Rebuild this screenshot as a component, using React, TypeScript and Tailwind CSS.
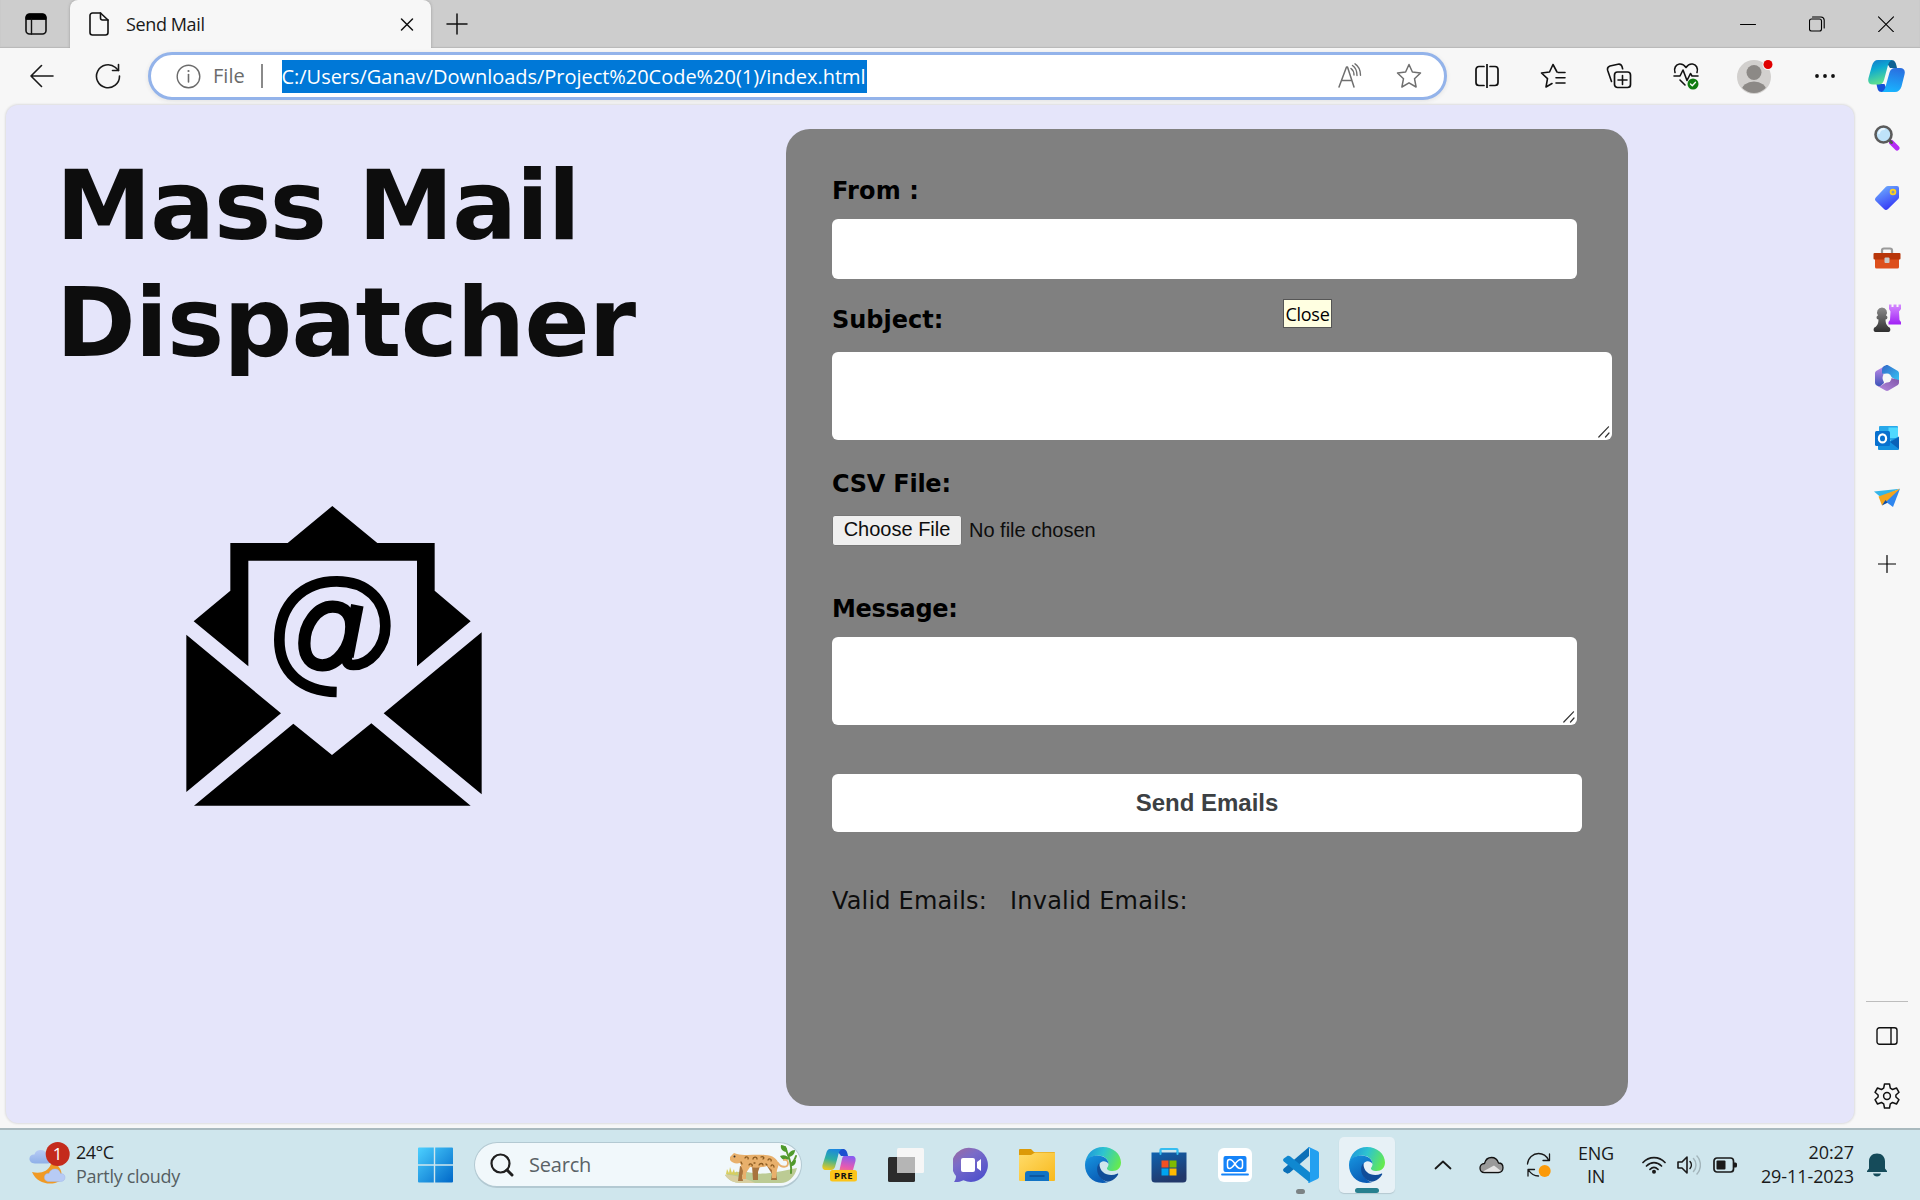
import React from "react";

const UI = "font-['Open_Sans',sans-serif]";
const LABEL = "h-7 leading-7 text-[24px] font-bold text-black whitespace-nowrap";

type SvgProps = { w: number; h: number; children: React.ReactNode; box?: string; className?: string };

function Svg({ w, h, children, box, className }: SvgProps) {
  return (
    <svg
      width={w}
      height={h}
      viewBox={box ?? `0 0 ${w} ${h}`}
      fill="none"
      strokeLinecap="round"
      strokeLinejoin="round"
      className={className ?? "shrink-0"}
    >
      {children}
    </svg>
  );
}

function Cell({ className, children }: { className: string; children: React.ReactNode }) {
  return <div className={`flex shrink-0 items-center justify-center ${className}`}>{children}</div>;
}

function TabStrip() {
  return (
    <div className="flex h-12 bg-[#cdcdcd] shadow-[inset_0_-1px_1px_#b8b8b8]">
      <div className="flex w-[70px] items-center pl-[25px]">
        <Svg w={22} h={22}>
          <rect x="1" y="1" width="20" height="20" rx="3.5" stroke="#111" strokeWidth="1.6" />
          <path d="M1 6V4.500A3.500 3.500 0 0 1 4.500 1h13A3.500 3.500 0 0 1 21 4.500V6z" fill="#000" stroke="#000" />
          <path d="M6.500 6v15" stroke="#111" strokeWidth="1.4" />
        </Svg>
      </div>
      <div className="flex w-[361px] items-center rounded-t-[8px] bg-[#f7f7f7] pl-[19px] shadow-[0_0_3px_#999] [clip-path:inset(0_-4px_0_-4px)]">
        <Svg w={20} h={24}>
          <path d="M3.500 1h8L19 8v12.500a2.500 2.500 0 0 1-2.500 2.500h-13A2.500 2.500 0 0 1 1 20.500v-17A2.500 2.500 0 0 1 3.500 1z" stroke="#111" strokeWidth="1.6" />
          <path d="M11.500 1v5A2 2 0 0 0 13.500 8H19" stroke="#111" strokeWidth="1.6" />
        </Svg>
        <span className="ml-[17px] w-[269px] text-[18px] tracking-[-0.38px] text-[#1a1a1a]">Send Mail</span>
        <Svg w={24} h={24}>
          <path d="M6.500 7l11 11M17.500 7l-11 11" stroke="#111" strokeWidth="1.5" />
        </Svg>
      </div>
      <div className="flex flex-1 items-center pl-[15px]">
        <Svg w={22} h={22}>
          <path d="M11 1v20M1 11h20" stroke="#111" strokeWidth="1.5" />
        </Svg>
      </div>
      <Cell className="w-[70px]">
        <Svg w={16} h={16}>
          <path d="M.5 8.500h15" stroke="#000" strokeWidth="1.100" />
        </Svg>
      </Cell>
      <Cell className="w-[68px]">
        <Svg w={16} h={16}>
          <rect x="0.500" y="3" width="12" height="12" rx="2" stroke="#000" strokeWidth="1.100" />
          <path d="M3.500 1h8.500A3.300 3.300 0 0 1 15.200 4v8" stroke="#000" strokeWidth="1.100" />
        </Svg>
      </Cell>
      <Cell className="w-[69px]">
        <Svg w={16} h={16}>
          <path d="M.5.8l15 15M15.500.8l-15 15" stroke="#000" strokeWidth="1.100" />
        </Svg>
      </Cell>
    </div>
  );
}

function CopilotLogo() {
  return (
    <Svg w={37} h={34}>
      <defs>
        <linearGradient id="cpA" x1="0" y1="0" x2="0.300" y2="1">
          <stop offset="0" stopColor="#1577c9" />
          <stop offset=".4" stopColor="#0ca8d2" />
          <stop offset="1" stopColor="#5fe08e" />
        </linearGradient>
        <linearGradient id="cpB" x1="0.600" y1="0" x2="0.400" y2="1">
          <stop offset="0" stopColor="#2a6fe0" />
          <stop offset="1" stopColor="#18b4ff" />
        </linearGradient>
      </defs>
      <path d="M17 1h6.500c3.500 0 4.500 3 5.500 8h-7z" fill="#0d6193" />
      <path d="M20 33h-6.500C10 33 9.500 30 8.500 25h8z" fill="#1552d8" />
      <path d="M10 1h15c-3.500.5-4.500 3-5.500 7l-3.500 13c-1 3-2.500 4.500-5.500 4.500H5c-4 0-5.500-2.500-4.500-6.500L4 6.500C5 3 7 1 10 1z" fill="url(#cpA)" />
      <path d="M27 33H13c3-.5 4-3 5-7l3.500-12.500c1-3 2.500-4.500 5.500-4.500h5c4 0 5.500 2.500 4.500 6.500L33.500 27.500C32.500 31 30 33 27 33z" fill="url(#cpB)" />
    </Svg>
  );
}

function Toolbar() {
  return (
    <div className="flex h-14 items-center bg-[#f7f7f7]">
      <Cell className="w-[84px]">
        <Svg w={24} h={24}>
          <path d="M23 12H1M11.500 1.500L1 12l10.500 10.500" stroke="#1a1a1a" strokeWidth="1.600" />
        </Svg>
      </Cell>
      <Cell className="w-12">
        <Svg w={26} h={26}>
          <path d="M24.500 13A11.500 11.500 0 1 1 20.500 4.500L23.500 7.500" stroke="#1a1a1a" strokeWidth="1.600" />
          <path d="M23.500 1.500v6h-6" stroke="#1a1a1a" strokeWidth="1.600" />
        </Svg>
      </Cell>
      <div className="ml-4 flex h-12 w-[1299px] items-center rounded-full border-[3px] border-[#93b3ea] bg-white pl-[25px] shadow-[0_1px_4px_#e0e0e0]">
        <Svg w={25} h={25}>
          <circle cx="12.500" cy="12.500" r="11.300" stroke="#6b6b6b" strokeWidth="1.400" />
          <path d="M12.500 10.500v7.500" stroke="#6b6b6b" strokeWidth="1.600" />
          <circle cx="12.500" cy="7" r="1.100" fill="#6b6b6b" />
        </Svg>
        <span className="ml-3 w-12 text-[20px] tracking-[0.050px] text-[#6b6b6b]">File</span>
        <div className="h-6 w-[1.500px] bg-[#8a8a8a]" />
        <span className="ml-[19px] h-[33px] w-[585px] overflow-hidden bg-[#0078d7] text-[20px] leading-[33px] tracking-[-0.03px] whitespace-nowrap text-white">
          C:/Users/Ganav/Downloads/Project%20Code%20(1)/index.html
        </span>
        <div className="flex-1" />
        <Cell className="w-[59px]">
          <Svg w={26} h={26}>
            <path d="M2 24L9.500 4h1L17 24M4.500 17.500h10" stroke="#6f6f6f" strokeWidth="1.500" />
            <path d="M14 5.500c2 1.500 3 3.500 3 6.500M15.500 2.500c3 2 4.500 5.500 4.500 10M18 .800c4 2.500 5.500 6.500 5.500 11.500" stroke="#6f6f6f" strokeWidth="1.400" />
          </Svg>
        </Cell>
        <Cell className="mr-[6px] w-[59px]">
          <Svg w={26} h={26}>
            <path d="M13 1.500l3.400 7.500 8.100 1-6 5.700 1.600 8.300-7.100-4.200L5.900 24l1.600-8.300-6-5.700 8.100-1z" stroke="#6f6f6f" strokeWidth="1.500" />
          </Svg>
        </Cell>
      </div>
      <Cell className="ml-[6px] w-[67px]">
        <Svg w={24} h={24}>
          <path d="M9 2.500H4A3 3 0 0 0 1 5.500v13a3 3 0 0 0 3 3h5M15 2.500h5a3 3 0 0 1 3 3v13a3 3 0 0 1-3 3h-5M12 0v24" stroke="#111" strokeWidth="1.700" />
        </Svg>
      </Cell>
      <Cell className="w-[66px]">
        <Svg w={26} h={26}>
          <path d="M17 9L13 1.500 9.500 9l-8 1 6 5.700L6 24l6-3.500" stroke="#111" strokeWidth="1.600" />
          <path d="M18 9.500h7M16 14.700h9M16 20h9" stroke="#111" strokeWidth="1.600" />
        </Svg>
      </Cell>
      <Cell className="w-[66px]">
        <Svg w={26} h={26}>
          <path d="M5.500 18.500L1.700 7.500C1 5 2 3.700 4 3L12 1.200c2-.4 3.300.3 4 2.300l.6 2.300" stroke="#111" strokeWidth="1.600" />
          <rect x="8.500" y="9" width="16" height="15.500" rx="3" stroke="#111" strokeWidth="1.700" />
          <path d="M16.500 12.500v9M12 17h9" stroke="#111" strokeWidth="1.600" />
        </Svg>
      </Cell>
      <Cell className="w-[67px]">
        <Svg w={26} h={28}>
          <path d="M2 10.500C.5 6 3 2.500 6.500 2c3-.3 5 1.200 6.500 3.500C14.500 3.200 16.500 1.700 19.500 2c3.500.5 6 4 4.500 8.500M7 18l5 5" stroke="#111" strokeWidth="1.600" />
          <path d="M1 14h6l3-6 4 10.500 3.500-7 1.500 2.500h6" stroke="#111" strokeWidth="1.600" />
          <circle cx="20" cy="22" r="5.500" fill="#107c10" />
          <path d="M17.500 22l1.800 1.800 3.200-3.600" stroke="#fff" strokeWidth="1.300" />
        </Svg>
      </Cell>
      <Cell className="w-[72px]">
        <Svg w={38} h={36}>
          <clipPath id="av"><circle cx="18" cy="19" r="16" /></clipPath>
          <circle cx="18" cy="19" r="17" fill="#d2d0ce" />
          <circle cx="18" cy="14.500" r="7.500" fill="#8c8986" />
          <ellipse cx="18" cy="33" rx="12.500" ry="9.500" fill="#8c8986" clipPath="url(#av)" />
          <circle cx="32" cy="6.500" r="5.500" fill="#f7f7f7" />
          <circle cx="32" cy="6.500" r="4.500" fill="#e00000" />
        </Svg>
      </Cell>
      <Cell className="w-[67px]">
        <Svg w={22} h={6}>
          <circle cx="3" cy="3" r="1.900" fill="#111" />
          <circle cx="11" cy="3" r="1.900" fill="#111" />
          <circle cx="19" cy="3" r="1.900" fill="#111" />
        </Svg>
      </Cell>
      <Cell className="w-[57px]">
        <CopilotLogo />
      </Cell>
    </div>
  );
}

function Envelope() {
  return (
    <Svg w={350} h={350} box="0 0 1050 1050" className="mt-[98px] ml-[154px]">
      <g fill="#000">
        <path d="M517 78L652 189H824V332L932 424 771 559V242H265V559L101 424 211 332V189H383z" />
        <path d="M79 464L363 700 79 936zM965 457V943L671 700z" />
        <path d="M102 977L400 731 516 825 634 730 932 977z" />
      </g>
      <g stroke="#000" strokeLinecap="butt">
        <path
          d="M530 636C425 634 358 575 358 480C358 375 428 304 530 304C622 304 676 362 676 438C676 505 626 555 580 555C562 555 558 544 561 524"
          strokeWidth="32"
        />
        <path d="M592 376L562 530" strokeWidth="38" />
        <path d="M574 440C574 402 552 380 518 380C471 380 433 433 433 490C433 532 454 556 487 556C532 556 574 502 574 440z" strokeWidth="37" />
      </g>
    </Svg>
  );
}

function Area({ className }: { className: string }) {
  return (
    <div className={`relative h-[88px] rounded-[6px] bg-white ${className}`}>
      <Svg w={12} h={12} className="absolute right-[2px] bottom-[2px]">
        <path d="M.8 11L10.500.8M7.500 11L11 7" stroke="#333" strokeWidth="1.200" />
      </Svg>
    </div>
  );
}

function MailForm() {
  return (
    <div className="relative mt-[24px] h-[977px] w-[842px] shrink-0 rounded-[24px] bg-[#808080] pt-12 pl-[46px]">
      <div className={`tracking-[0.15px] ${LABEL}`}>From :</div>
      <div className="mt-[14px] h-[60px] w-[745px] rounded-[6px] bg-white" />
      <div className={`mt-[27px] ${LABEL}`}>Subject:</div>
      <Area className="mt-[18px] w-[780px]" />
      <div className={`mt-[30px] tracking-[-0.25px] ${LABEL}`}>CSV File:</div>
      <div className="mt-[17px] flex h-[30px] items-center font-['Liberation_Sans',Arial,sans-serif] text-[20px] text-[#0d0d0d]">
        <div className="h-[31px] w-[130px] rounded-[3px] border border-[#767676] bg-[#efefef] text-center leading-[27px]">Choose File</div>
        <span className="ml-[7px] leading-[30px]">No file chosen</span>
      </div>
      <div className={`mt-[50px] tracking-[-0.3px] ${LABEL}`}>Message:</div>
      <Area className="mt-[14px] w-[745px]" />
      <div className="mt-[49px] h-[58px] w-[750px] rounded-[6px] bg-white text-center font-['Liberation_Sans',Arial,sans-serif] text-[24px] leading-[58px] font-bold text-[#3c4043]">
        Send Emails
      </div>
      <div className="mt-[55px] flex gap-[23px] text-[24px] leading-7 whitespace-nowrap text-[#0d0d0d]">
        <span className="tracking-[0.18px]">Valid Emails:</span>
        <span className="tracking-[0.22px]">Invalid Emails:</span>
      </div>
      <div className={`absolute top-[170px] left-[497px] h-[29px] w-[49px] border border-[#555] bg-[#ffffe1] text-center text-[18px] leading-[28px] tracking-[-0.3px] text-black ${UI}`}>
        Close
      </div>
    </div>
  );
}

function Sidebar() {
  return (
    <div className="mr-[4px] flex w-[58px] shrink-0 flex-col items-center pt-[3px]">
      <Cell className="h-[60px]">
        <Svg w={26} h={26}>
          <path d="M17.500 17.500L23 23" stroke="#b52cf5" strokeWidth="5" />
          <path d="M15.500 15.500l2 2" stroke="#555" strokeWidth="3" />
          <circle cx="9.500" cy="9.500" r="8" fill="#bfe3fa" stroke="#5b5b5b" strokeWidth="2.600" />
          <path d="M5 8a5 5 0 0 1 5-4" stroke="#e8f6ff" strokeWidth="2" />
        </Svg>
      </Cell>
      <Cell className="h-[60px]">
        <Svg w={24} h={24}>
          <defs>
            <linearGradient id="tag" x1="0.200" y1="0" x2="0.700" y2="1">
              <stop offset="0" stopColor="#6fb0ff" />
              <stop offset="1" stopColor="#3131f5" />
            </linearGradient>
          </defs>
          <path d="M13 0h9a2 2 0 0 1 2 2v9c0 1-.3 1.600-1 2.300L13 23c-1.300 1.300-2.700 1.300-4 0L.8 15c-1.200-1.200-1-2.500.2-3.700L10.700 1C11.400.3 12 0 13 0z" fill="url(#tag)" />
          <circle cx="18" cy="6" r="2.400" fill="#8a98a8" stroke="#ffd21f" strokeWidth="1.800" />
        </Svg>
      </Cell>
      <Cell className="h-[60px]">
        <Svg w={28} h={22}>
          <path d="M9 7V3.500A2 2 0 0 1 11 1.500h6A2 2 0 0 1 19 3.500V7" stroke="#9a9a9a" strokeWidth="2.200" />
          <rect x="2" y="8" width="24" height="13.500" rx="1.500" fill="#dd4f1c" />
          <rect x="0.500" y="6" width="27" height="6.500" rx="1" fill="#b8360a" />
          <rect x="11.500" y="10.500" width="5" height="5.500" rx="1" fill="#c9c9c9" />
        </Svg>
      </Cell>
      <Cell className="h-[60px]">
        <Svg w={28} h={28}>
          <defs>
            <linearGradient id="pawn" x1="0" y1="0" x2="0" y2="1">
              <stop offset="0" stopColor="#8a8a8a" />
              <stop offset="1" stopColor="#2f2f2f" />
            </linearGradient>
            <linearGradient id="rook" x1="0" y1="0" x2="0" y2="1">
              <stop offset="0" stopColor="#d58bff" />
              <stop offset="1" stopColor="#a020f5" />
            </linearGradient>
          </defs>
          <path d="M16 .5h2.500V3h2V.5h3V3h2V.5H28V5l-2 2.500.5 8.500 1.500 2v2.500H15.500V18l1.500-2 .5-8.500L16 5z" fill="url(#rook)" />
          <path d="M9 3.500a5 5 0 0 1 4 8c2 .5 2 4-.5 4 0 4 1 5.500 3 7.500 2.500.5 2.500 5 0 5h-13c-2.500 0-2.500-4.500 0-5 2-2 3-3.500 3-7.500-2.500 0-2.500-3.500-.5-4a5 5 0 0 1 4-8z" fill="url(#pawn)" />
        </Svg>
      </Cell>
      <Cell className="h-[60px]">
        <Svg w={24} h={26}>
          <defs>
            <linearGradient id="ma" x1="0" y1="0" x2="0" y2="1">
              <stop offset="0" stopColor="#c48ce8" />
              <stop offset="1" stopColor="#3b53b8" />
            </linearGradient>
            <linearGradient id="mb" x1="0" y1="0" x2="1" y2="1">
              <stop offset="0" stopColor="#3468c8" />
              <stop offset="1" stopColor="#35c5f5" />
            </linearGradient>
            <linearGradient id="mc" x1="0" y1="1" x2="1" y2="0">
              <stop offset="0" stopColor="#b58ae0" />
              <stop offset="1" stopColor="#8055a8" />
            </linearGradient>
          </defs>
          <path d="M9.500 1.200L2 5.500C.7 6.200 0 7.200 0 8.500v9C0 19 .8 20 2 20.700L5 21.500 9 18 8 13z" fill="url(#ma)" />
          <path d="M7 8.500V4.500C7 2.500 8.500 1 10.500.4 11.500 0 12.500 0 13.500.6L22 5.500C23.300 6.200 24 7.200 24 8.500v8L16 12 12 9z" fill="url(#mb)" />
          <path d="M24 15v2.500c0 1.300-.7 2.300-2 3L13.500 25.500c-1 .6-2 .6-3 0L2 20.700c2 .8 4 .3 5.500-1L12 17l4-4z" fill="url(#mc)" />
          <circle cx="12" cy="13" r="4.500" fill="#f7f7f7" />
        </Svg>
      </Cell>
      <Cell className="h-[60px]">
        <Svg w={24} h={24}>
          <rect x="4" y="0" width="19" height="14" rx="1" fill="#28a8ea" />
          <path d="M13.500 1.500H23V12h-9.500z" fill="#50d9ff" />
          <path d="M3 12l11 3 10-4.500V23a1 1 0 0 1-1 1H4a1 1 0 0 1-1-1z" fill="#1490df" />
          <path d="M24 11v12l-9-7z" fill="#0a62b8" />
          <rect x="0" y="5" width="15" height="15" rx="1.500" fill="#0871cf" />
          <ellipse cx="7.500" cy="12.400" rx="3.600" ry="4" stroke="#fff" strokeWidth="2.200" />
        </Svg>
      </Cell>
      <Cell className="h-[60px]">
        <Svg w={26} h={20}>
          <path d="M0 3.500L26 .8 6.500 9z" fill="#35b5e8" />
          <path d="M26 .8L19 19 9.500 12z" fill="#2f86ee" />
          <path d="M26 .8L4.500 8.500 8 17.500z" fill="#f5a51c" />
          <path d="M8 17.500L11.500 12l2 2.800z" fill="#0d4ea8" />
        </Svg>
      </Cell>
      <Cell className="h-[71px]">
        <Svg w={18} h={18}>
          <path d="M9 .5v17M.5 9h17" stroke="#000" strokeWidth="1.200" />
        </Svg>
      </Cell>
      <div className="flex-1" />
      <div className="h-px w-[42px] bg-[#bdbdbd]" />
      <Cell className="h-[67px]">
        <Svg w={22} h={18}>
          <rect x="1" y="0.800" width="20" height="16.400" rx="2.500" stroke="#111" strokeWidth="1.400" />
          <path d="M15 1v16" stroke="#111" strokeWidth="1.400" />
        </Svg>
      </Cell>
      <Cell className="mb-[6px] h-[53px]">
        <Svg w={26} h={26}>
          <path
            d="M10.500 1h5l.8 4.200 2.200 1.300L22.500 5 25 9.300 21.900 12v2L25 16.700 22.500 21l-4-1.500-2.200 1.300-.8 4.200h-5l-.8-4.200-2.200-1.300-4 1.500L1 16.700 4.100 14v-2L1 9.300 3.500 5l4 1.500 2.200-1.300z"
            stroke="#111"
            strokeWidth="1.500"
          />
          <circle cx="13" cy="13" r="3.400" stroke="#111" strokeWidth="1.500" />
        </Svg>
      </Cell>
    </div>
  );
}

function EdgeLogo() {
  return (
    <Svg w={36} h={36}>
      <defs>
        <linearGradient id="eTop" x1="0" y1="0.300" x2="1" y2="0.600">
          <stop offset="0" stopColor="#1e95dc" />
          <stop offset=".45" stopColor="#2ec4cf" />
          <stop offset="1" stopColor="#66eb4e" />
        </linearGradient>
        <linearGradient id="eMid" x1="0" y1="0" x2="0.500" y2="1">
          <stop offset="0" stopColor="#1795e0" />
          <stop offset="1" stopColor="#0a5cb5" />
        </linearGradient>
      </defs>
      <path d="M0 17C1 7 8 0 18 0c10 0 18 7 18 15.500 0 5-3.500 8.500-8.500 8.500-4 0-6-1.500-5.500-3 1-1.500 1.500-2.500 1.500-4C23.500 12 19 8.500 13 8.500 6 8.500 1.500 12.500 0 17z" fill="url(#eTop)" />
      <path d="M0 18C0 12 5.500 8.500 12 8.500c7 0 11.500 4 11.500 8.500-2-3.500-8-4-9.500 1-2 7 1 15 9 17.300C9 38.500 0 29 0 18z" fill="url(#eMid)" />
      <path d="M14.500 16C10 20 12 30 19 33.500c2 1.200 4 1.500 6 .8 3.500-1.300 6-3.500 8-6.600.5-.9 0-1.400-1-.9C25 30 14 27 14.500 16z" fill="#104d99" />
    </Svg>
  );
}

function Leopard() {
  return (
    <Svg w={76} h={42}>
      <path d="M0 31c8-4 18-4 28-2s26-1 44-5c-2 9-9 15-16 15H16C9 39 3 36 0 31z" fill="#bccb94" />
      <path d="M0 31c6-1 20 3 30 8H16C9 39 3 36 0 31z" fill="#d8cfa0" />
      <path d="M1 30l1-5 2 4 1-6 2 6 2-4 1 5 2-3 1 4z" fill="#d9cf5e" />
      <path d="M66 29c1-9-2-15-6-26M66 20c3-2 4-5 5-8" stroke="#5c9a32" strokeWidth="2" />
      <path d="M56 1c5 0 7 4 6 7-4 0-7-3-6-7zM70 6c0 4-3 7-7 7 0-4 3-7 7-7zM55 12c4-2 8 0 9 3-4 2-7 1-9-3zM71 16c0 4-2 6-5 6 0-3 2-6 5-6z" fill="#4f9a2c" />
      <path d="M15 22l7 2-1 5-4 2 1 6h-5zM27 22h8l-2 6v8h-5zM42 22l10-3-1 8 1 9h-6l1-6z" fill="#a8743e" />
      <path d="M5 13l4-4 3 1c8 2 20 0 28 1 8 0 12 4 14 9l-2 6-1 8h-4l0-8-5-4c-6 2-12 2-17 1l-4 6v6h-4l1-8-3-8c-4 1-8 0-10-3z" fill="#e8b06c" />
      <path d="M53 19c3 5 10 5 10 0 0-2-2-4-4-3" stroke="#e8b06c" strokeWidth="1.800" />
      <g stroke="#8a5a20" strokeWidth="1.300">
        <path d="M20 14c1-2 4-1 3 1M28 15c0-2 4-3 4 0M36 13c2-1 4 1 2 2M24 21c1-2 4-1 3 1M34 21c1-2 4-2 4 0M43 16c1-2 4-1 3 1M46 22c1-2 3-1 3 1M16 18l1 2M29 19h1M41 20l1 1" />
      </g>
      <circle cx="9.500" cy="12.500" r="1" fill="#333" />
    </Svg>
  );
}

function Taskbar() {
  return (
    <div className={`flex h-[72px] items-center border-t-2 border-[#a9b9be] bg-[#cfe6ed] text-[#1a1a1a] ${UI}`}>
      <div className="ml-[29px] flex w-[388px] items-center">
        <Svg w={41} h={43} className="mb-1 shrink-0">
          <defs>
            <linearGradient id="cl" x1="0" y1="0" x2="0" y2="1">
              <stop offset="0" stopColor="#b7cbf5" />
              <stop offset="1" stopColor="#8fb0e8" />
            </linearGradient>
          </defs>
          <path d="M27 22c6 5 7 11 4 17C22 44 8 42 3 30c8 2 16 0 19-8z" fill="#f09a25" />
          <path d="M6 21.500c-4 0-6-3-5.500-5.500S3 12 5.500 12.500C6.500 9 9 8 12 8s5.500 2 6 5c3 0 5 2 5 4.500s-2 4-4 4z" fill="url(#cl)" />
          <path d="M20 39.500c-3.500 0-5-2.500-4.500-5s2.500-3.500 4.500-3c1-3 3-4.500 6-4.500s5 2 5.500 4.500c3 0 4.500 1.500 4.500 4s-2 4-4 4z" fill="#b7cbf5" stroke="#a0b8ea" strokeWidth="0.500" />
          <circle cx="28.700" cy="12" r="12" fill="#c42b1c" />
          <text x="28.500" y="18" textAnchor="middle" fill="#fff" fontSize="17" fontFamily="Open Sans">1</text>
        </Svg>
        <div className="mb-[3px] ml-[6px] text-[18px] leading-6">
          <div className="tracking-[-0.5px]">24°C</div>
          <div className="tracking-[-0.3px] text-[#555e62]">Partly cloudy</div>
        </div>
      </div>
      <Svg w={36} h={36}>
        <defs>
          <linearGradient id="win" x1="0" y1="0" x2="1" y2="1">
            <stop offset="0" stopColor="#4cd0ff" />
            <stop offset="1" stopColor="#0068c8" />
          </linearGradient>
        </defs>
        <path d="M2 .500h14.800v16.800H1V1.500A1 1 0 0 1 2 .500zM18.200.500H35a1 1 0 0 1 1 1v15.800H18.200zM1 18.700h15.800v16.800H2a1 1 0 0 1-1-1zM18.200 18.700H36v15.800a1 1 0 0 1-1 1H18.200z" fill="url(#win)" />
      </Svg>
      <div className="ml-[21px] flex h-[46px] w-[328px] items-center overflow-hidden rounded-full border border-b-2 border-[#b3c9d2] bg-[#f1f8fb] pl-[15px]">
        <Svg w={24} h={24}>
          <circle cx="10.500" cy="10.500" r="9" stroke="#1f1f1f" strokeWidth="2.200" />
          <path d="M17 17l5 5" stroke="#1f1f1f" strokeWidth="3" />
        </Svg>
        <span className="ml-[15px] w-[196px] text-[20px] tracking-[-0.200px] text-[#5a6266]">Search</span>
        <Leopard />
      </div>
      <Cell className="ml-[5px] w-[66px]">
        <Svg w={36} h={34}>
          <defs>
            <linearGradient id="pa" x1="0.600" y1="0" x2="0.400" y2="1">
              <stop offset="0" stopColor="#1a86e0" />
              <stop offset=".5" stopColor="#2fb0a0" />
              <stop offset="1" stopColor="#e8c820" />
            </linearGradient>
            <linearGradient id="pb" x1="0.500" y1="0" x2="0.300" y2="1">
              <stop offset="0" stopColor="#8a5cf0" />
              <stop offset=".6" stopColor="#e85ab0" />
              <stop offset="1" stopColor="#f58a60" />
            </linearGradient>
          </defs>
          <path d="M14 1h7c3 0 4 2 5 7h-7z" fill="#1c4fd0" />
          <path d="M8 1h13c-3 0-4 3-5 7l-3 11c-.8 2-2 3-4 3H4c-3 0-4-2-3.500-5L4 6C4.800 2.500 6 1 8 1z" fill="url(#pa)" />
          <path d="M22 8h8c3 0 4 2 3.500 5L31 22c-1 3-2 4-4 4H14c2 0 3-2 3.500-4L20 11c.5-2 1-3 2-3z" fill="url(#pb)" />
          <rect x="8" y="22" width="27" height="11.500" rx="2.500" fill="#fcc419" />
          <text x="21.500" y="31.300" textAnchor="middle" fill="#111" fontSize="9.500" fontWeight="bold" fontFamily="Open Sans" letterSpacing="0.500">PRE</text>
        </Svg>
      </Cell>
      <Cell className="w-[65px]">
        <Svg w={36} h={36}>
          <rect x="0" y="10" width="27" height="25" rx="1.500" fill="#2c2c2c" />
          <rect x="9" y="1" width="27" height="25" rx="1.500" fill="#f6f6f6" />
          <rect x="9" y="10" width="18" height="16" fill="#b5b5b5" />
        </Svg>
      </Cell>
      <Cell className="w-[66px]">
        <Svg w={36} h={36}>
          <defs>
            <linearGradient id="chat" x1="0" y1="0" x2="0.700" y2="1">
              <stop offset="0" stopColor="#a06a9c" />
              <stop offset=".4" stopColor="#7a6cc8" />
              <stop offset="1" stopColor="#4f50cc" />
            </linearGradient>
          </defs>
          <path d="M18 1a17 17 0 1 1-7.500 32.300C7 35 4 35.300 1 35c1.500-2 2-4 2-6A17 17 0 0 1 18 1z" fill="url(#chat)" />
          <rect x="8" y="11" width="14" height="14" rx="2" fill="#fff" />
          <path d="M24 15l4-3v12l-4-3z" fill="#fff" />
        </Svg>
      </Cell>
      <Cell className="w-[66px]">
        <Svg w={36} h={34}>
          <defs>
            <linearGradient id="fold" x1="0" y1="0" x2="1" y2="1">
              <stop offset="0" stopColor="#ffdc6b" />
              <stop offset="1" stopColor="#f8b91c" />
            </linearGradient>
          </defs>
          <path d="M0 2a1 1 0 0 1 1-1h11l3 3h20a1 1 0 0 1 1 1v6H0z" fill="#dc9a08" />
          <path d="M0 7h12l4-2.500h20V32a1 1 0 0 1-1 1H1a1 1 0 0 1-1-1z" fill="url(#fold)" />
          <path d="M6 33V26a3 3 0 0 1 3-3h18a3 3 0 0 1 3 3v7z" fill="#1173c4" />
          <path d="M11 28h14" stroke="#0b4f94" strokeWidth="1.500" />
        </Svg>
      </Cell>
      <Cell className="w-[66px]">
        <EdgeLogo />
      </Cell>
      <Cell className="w-[65px]">
        <Svg w={36} h={36}>
          <defs>
            <linearGradient id="st" x1="0" y1="0" x2="0.400" y2="1">
              <stop offset="0" stopColor="#0f62b0" />
              <stop offset="1" stopColor="#22386a" />
            </linearGradient>
          </defs>
          <path d="M9.500 8V3a1 1 0 0 1 1-1h15a1 1 0 0 1 1 1v5" stroke="#35bdf0" strokeWidth="2.200" />
          <path d="M.500 5.500h35V32a3.500 3.500 0 0 1-3.500 3.500H4A3.500 3.500 0 0 1 .5 32z" fill="url(#st)" />
          <path d="M9.500 5.500V7M26.500 5.500V7" stroke="#35bdf0" strokeWidth="2" />
          <path d="M10.500 13.500h7v7h-7z" fill="#f25022" />
          <path d="M18.500 13.500h7v7h-7z" fill="#7fba00" />
          <path d="M10.500 21.500h7v7h-7z" fill="#00a4ef" />
          <path d="M18.500 21.500h7v7h-7z" fill="#ffb900" />
        </Svg>
      </Cell>
      <Cell className="w-[67px]">
        <Svg w={34} h={34}>
          <rect width="34" height="34" rx="6" fill="#fff" />
          <rect x="5.500" y="8" width="23" height="16" rx="2" fill="#1583f8" />
          <path d="M4 26.500h26" stroke="#1583f8" strokeWidth="1.800" />
          <path d="M17 16c-1.500-2.500-3.500-4.500-5.500-4.500-1.500 0-2 1-2 2.500v4c0 1.500.5 2.500 2 2.500 4 0 7-9 11-9 1.500 0 2 1 2 2.500v4c0 1.500-.5 2.500-2 2.500-2 0-4-2-5.500-4.500z" stroke="#fff" strokeWidth="1.500" />
        </Svg>
      </Cell>
      <div className="relative flex w-[65px] items-center justify-center">
        <Svg w={36} h={36}>
          <path d="M26 0v9L7 25.500l-2.500 1.300L.8 24.500c-1-.8-1-2 0-3z" fill="#0b70b8" />
          <path d="M.8 14.500c-1-1-1-2.200 0-3L4 9.200C5 8.500 6 8.600 7 9.300L27 25.500v10.300z" fill="#1088d0" />
          <path d="M26 0l8.500 4c1 .5 1.500 1.200 1.500 2.300v23.400c0 1-.5 1.800-1.500 2.300L26 36c-.8-.3-1.200-.8-1-1.500h2V1.500h-2C25 .8 25.300.3 26 0z" fill="#24a0f0" />
        </Svg>
        <div className="absolute top-[42px] left-[28px] h-[5px] w-[9px] rounded-full bg-[#7c8385]" />
      </div>
      <div className="relative ml-[6px] flex h-14 w-14 items-center justify-center rounded-[5px] bg-[#e7f1f6] shadow-[0_1px_1px_#b4c8d0]">
        <EdgeLogo />
        <div className="absolute bottom-0 left-4 h-[5px] w-6 rounded-full bg-[#27808f]" />
      </div>
      <Cell className="ml-[24px] w-12">
        <Svg w={18} h={10}>
          <path d="M1.500 8.500L9 1.500l7.500 7" stroke="#1a1a1a" strokeWidth="1.800" />
        </Svg>
      </Cell>
      <Cell className="w-12">
        <Svg w={25} h={18}>
          <path d="M5.500 16.500C2.500 16.500 1 14.500 1 12s2-4.500 4.500-4.500C6.500 3.500 9 1.500 12.500 1.500S18.500 4 19.500 7c3 0 4.500 2 4.500 4.800s-2 4.700-4.500 4.700z" fill="#9a9a9a" stroke="#111" strokeWidth="1.300" />
          <path d="M4 15.500L15 9.500l7 5.500-3 .800H5.500z" fill="#e4e4e4" />
        </Svg>
      </Cell>
      <Cell className="w-12">
        <Svg w={26} h={26}>
          <path d="M1.500 12C2 6 7 1.500 12.500 1.500c4.500 0 8 2.300 10 6.500M23.500 2v6.500H17M2 24v-6.500h6.500M2.500 18c2.500 4 6 6 10 6" stroke="#1a1a1a" strokeWidth="1.300" />
          <circle cx="18.700" cy="19" r="6" fill="#fb9a09" />
        </Svg>
      </Cell>
      <div className="w-[66px] text-center text-[18px] leading-[23px] tracking-[-0.2px]">
        ENG
        <br />
        IN
      </div>
      <Cell className="ml-[9px] w-8">
        <Svg w={24} h={18}>
          <path d="M1 6.500c6-6.500 16-6.500 22 0M4.500 10c4.500-4.500 10.500-4.500 15 0M8 13.300c2.500-2.300 5.500-2.300 8 0" stroke="#1a1a1a" strokeWidth="1.700" />
          <circle cx="12" cy="15.700" r="2" fill="#1a1a1a" />
        </Svg>
      </Cell>
      <Cell className="w-[38px]">
        <Svg w={24} h={20}>
          <path d="M1 7h4l5-5v16l-5-5H1z" stroke="#1a1a1a" strokeWidth="1.600" />
          <path d="M13 6.500c1.800 2 1.800 5 0 7" stroke="#1a1a1a" strokeWidth="1.500" />
          <path d="M16.500 3.500c3.300 3.500 3.300 9.500 0 13M20 1c4.500 5 4.500 13 0 18" stroke="#a3b5bb" strokeWidth="1.500" />
        </Svg>
      </Cell>
      <Cell className="w-[34px]">
        <Svg w={25} h={16}>
          <rect x="1" y="1" width="19.500" height="14" rx="3" stroke="#1a1a1a" strokeWidth="1.700" />
          <rect x="3.500" y="3.500" width="9" height="9" rx="1" fill="#1a1a1a" />
          <path d="M21 5.500h1.500a1.500 1.500 0 0 1 1.500 1.500v2a1.500 1.500 0 0 1-1.500 1.500H21z" fill="#1a1a1a" />
        </Svg>
      </Cell>
      <div className="mb-[3px] w-[112px] text-right text-[18px] leading-6 tracking-[-0.08px] whitespace-nowrap">
        20:27
        <br />
        29-11-2023
      </div>
      <Svg w={20} h={24} className="ml-[13px] shrink-0">
        <path d="M10 .500c5 0 8 3.500 8 8v7l2 2.500v1H0v-1l2-2.500v-7C2 4 5 .5 10 .5z" fill="#154b5a" />
        <path d="M6 20.500h8c-.5 2-2 3-4 3s-3.500-1-4-3z" fill="#154b5a" />
      </Svg>
    </div>
  );
}

export default function App() {
  return (
    <div className={`flex h-[1200px] w-[1920px] flex-col overflow-hidden bg-[#f7f7f7] ${UI}`}>
      <TabStrip />
      <Toolbar />
      <div className="flex h-[1024px] justify-between pt-px pl-[6px]">
        <div className="flex h-[1018px] w-[1848px] rounded-[12px] bg-[#e5e5fa] font-['DejaVu_Sans',Verdana,sans-serif] shadow-[0_0_2px_1px_#dddddf]">
          <div className="w-[780px] shrink-0">
            <h1 className="pt-[43px] pl-[50px] text-[96px] leading-[117px] font-bold tracking-[-1.2px] text-[#0d0d0d]">
              Mass Mail
              <br />
              <span className="tracking-[-0.75px]">Dispatcher</span>
            </h1>
            <Envelope />
          </div>
          <MailForm />
        </div>
        <Sidebar />
      </div>
      <Taskbar />
    </div>
  );
}
